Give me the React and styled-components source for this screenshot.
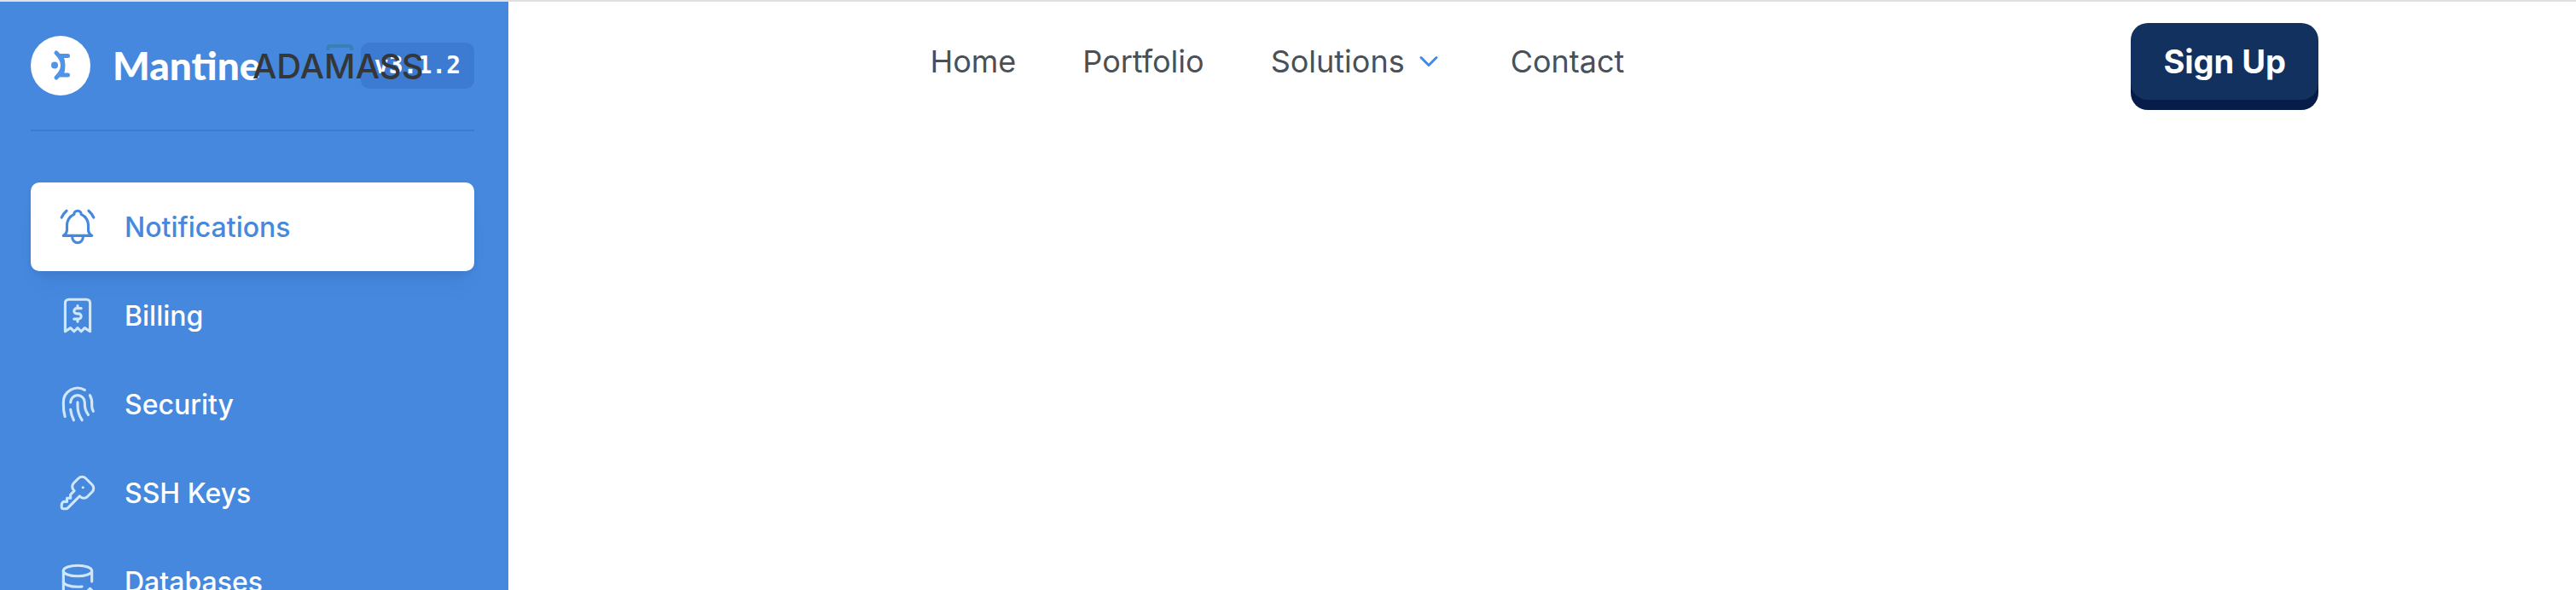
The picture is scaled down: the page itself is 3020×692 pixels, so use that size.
import React from "react";
import styled, { createGlobalStyle } from "styled-components";
import {
  TbBellRinging,
  TbReceipt2,
  TbFingerprint,
  TbKey,
  TbDatabaseImport,
  TbChevronDown,
} from "react-icons/tb";

const GlobalStyle = createGlobalStyle`
  *, *::before, *::after { box-sizing: border-box; }
  body {
    margin: 0;
    background: #fff;
    font-family: Inter, "Liberation Sans", sans-serif;
  }
  a { text-decoration: none; color: inherit; }
`;

const Page = styled.div`
  display: grid;
  grid-template-columns: 596px 1fr;
  grid-template-rows: auto 1fr;
  height: 100vh;
  overflow: hidden;
  border-top: 2px solid #e0e0e0;
`;

const Header = styled.header`
  grid-area: 1 / 1 / 2 / 3;
  z-index: 1;
  display: flex;
  align-items: center;
  justify-content: space-between;
  height: 140px;
  padding: 0 10% 0 calc(10% - 6px);
`;

const Sidebar = styled.aside`
  grid-area: 1 / 1 / 3 / 2;
  min-height: 0;
  padding: 40px 40px 0 36px;
  background: #4588de;
  color: #fff;
`;

const SidebarTop = styled.div`
  display: flex;
  align-items: center;
  justify-content: space-between;
  padding-bottom: 40px;
  margin-bottom: 60px;
  border-bottom: 2px solid #3d7bd2;
`;

const Brand = styled.a`
  display: flex;
  align-items: center;
  gap: 26px;
  font: 900 46px/70px Lato, sans-serif;
`;

const Version = styled.code`
  padding: 0 16px;
  border-radius: 10px;
  background: #3d7bd2;
  font: 700 28px/54px "DejaVu Sans Mono", monospace;
`;

const SideLink = styled.a`
  display: flex;
  align-items: center;
  gap: 30px;
  height: 104px;
  padding: 0 30px;
  border-radius: 10px;
  font-size: 32px;
  font-weight: 500;
  color: ${(p) => (p.$active ? "#4588de" : "#fff")};
  background: ${(p) => (p.$active ? "#fff" : "transparent")};
  box-shadow: ${(p) =>
    p.$active
      ? "0 2px 6px rgba(0,0,0,.05), 0 20px 30px -10px rgba(0,0,0,.05), 0 14px 14px -10px rgba(0,0,0,.04)"
      : "none"};

  svg {
    width: 50px;
    height: 50px;
    stroke-width: 1.5;
    color: ${(p) => (p.$active ? "#4588de" : "#d0e6fb")};
  }
`;

const SiteLogo = styled.a`
  display: grid;
  justify-items: center;
  padding-top: 4px;
  color: #343638;
  font: 500 40px/37px Inter, sans-serif;
`;

const NavBar = styled.nav`
  display: flex;
  gap: 78px;
`;

const NavLink = styled.a`
  display: flex;
  align-items: center;
  gap: 10px;
  color: #495057;
  font-size: 36px;
  line-height: 60px;

  svg {
    width: 36px;
    height: 36px;
    color: #4388ea;
  }
`;

const SignUp = styled.button`
  height: 90px;
  padding: 0 38px;
  border: 0;
  border-radius: 20px;
  background: #13315f;
  box-shadow: 0 12px 0 #071c49;
  color: #fff;
  font: 700 38px/60px Inter, sans-serif;
`;

const MantineMark = () => (
  <svg width="70" height="70" viewBox="0 0 70 70" aria-hidden="true">
    <circle cx="35" cy="35" r="35" fill="#fff" />
    <g fill="none" stroke="#4f94e8" strokeWidth="5" strokeLinecap="round">
      <path d="M30 20q15 14.500 0 29" />
      <path d="M34 23.500h9.500M34 46h9.500" />
    </g>
    <path d="M37 24q4 11 0 22" fill="none" stroke="#4f94e8" strokeWidth="3" />
    <circle cx="28" cy="34.500" r="4" fill="#4f94e8" />
  </svg>
);

const LogoAccent = () => (
  <svg width="38" height="7" viewBox="0 0 38 7" aria-hidden="true">
    <path
      d="M7.500 7V5q0-3 3-3h22q3 0 3 3v2"
      fill="none"
      stroke="#3a80b4"
      strokeWidth="4"
    />
  </svg>
);

const sideItems = [
  ["Notifications", TbBellRinging],
  ["Billing", TbReceipt2],
  ["Security", TbFingerprint],
  ["SSH Keys", TbKey],
  ["Databases", TbDatabaseImport],
];

export default function App() {
  return (
    <>
      <GlobalStyle />
      <Page>
        <Sidebar>
          <SidebarTop>
            <Brand href="#">
              <MantineMark />
              Mantine
            </Brand>
            <Version>v3.1.2</Version>
          </SidebarTop>
          <nav aria-label="Settings">
            {sideItems.map(([label, Icon], i) => (
              <SideLink href="#" key={label} $active={i === 0}>
                <Icon />
                {label}
              </SideLink>
            ))}
          </nav>
        </Sidebar>
        <Header>
          <SiteLogo href="#">
            <LogoAccent />
            ADAMASS
          </SiteLogo>
          <NavBar aria-label="Main">
            <NavLink href="#">Home</NavLink>
            <NavLink href="#">Portfolio</NavLink>
            <NavLink href="#">
              Solutions <TbChevronDown />
            </NavLink>
            <NavLink href="#">Contact</NavLink>
          </NavBar>
          <SignUp type="button">Sign Up</SignUp>
        </Header>
      </Page>
    </>
  );
}
